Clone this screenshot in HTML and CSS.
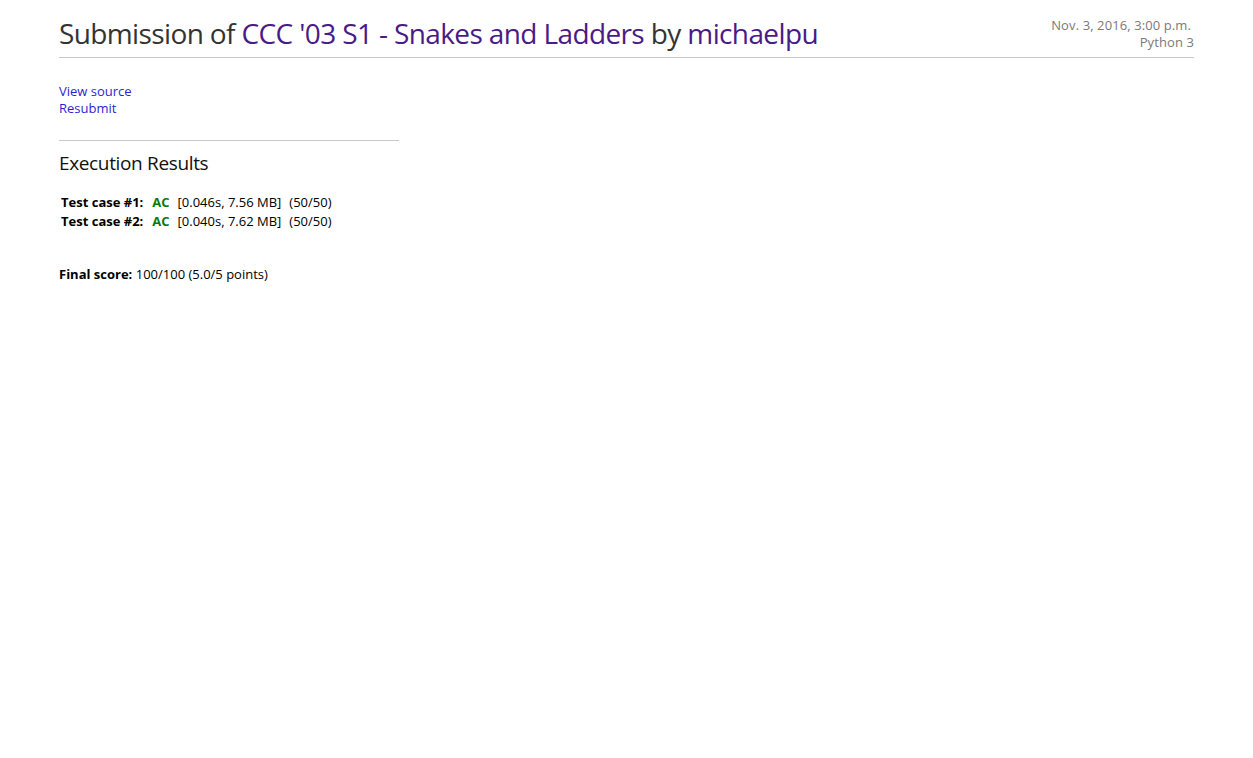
FILE: index.html
```html
<!DOCTYPE html>
<html>
<head>
<meta charset="utf-8">
<link rel="stylesheet" href="styles.css">
</head>
<body>
<div class="page">
  <header class="title-row">
    <h1 class="title">Submission of <a class="visited" href="#">CCC '03 S1 - Snakes and Ladders</a> by <a class="visited" href="#">michaelpu</a></h1>
    <div class="meta">
      <div class="date">Nov. 3, 2016, 3:00 p.m.</div>
      <div class="lang">Python 3</div>
    </div>
  </header>
  <div class="links">
    <a href="#">View source</a>
    <a href="#">Resubmit</a>
  </div>
  <hr class="sep">
  <h2 class="results-title">Execution Results</h2>
  <table class="cases">
    <tr><td class="label">Test case #1:</td><td class="status">AC</td><td class="detail">[0.046s, 7.56 MB]</td><td class="points">(50/50)</td></tr>
    <tr><td class="label">Test case #2:</td><td class="status">AC</td><td class="detail">[0.040s, 7.62 MB]</td><td class="points">(50/50)</td></tr>
  </table>
  <p class="final"><b>Final score:</b> 100/100 (5.0/5 points)</p>
</div>
</body>
</html>
```
FILE: styles.css
```css
html, body {
  margin: 0;
  padding: 0;
  background: #fff;
}
body {
  font-family: "Open Sans", "Noto Sans", sans-serif;
  color: #000;
  font-size: 13px;
}
.page {
  padding: 0 59px;
}
a {
  color: #2b1fcf;
  text-decoration: none;
}
a.visited {
  color: #4a1a86;
}
.title-row {
  display: flex;
  justify-content: space-between;
  align-items: flex-start;
  border-bottom: 1px solid #c8c8c8;
  padding-top: 14px;
  height: 58px;
  box-sizing: border-box;
}
.title {
  margin: 0;
  font-weight: 400;
  font-size: 28px;
  line-height: 38px;
  color: #333;
  letter-spacing: -0.62px;
}
.meta {
  text-align: right;
  font-size: 13px;
  line-height: 17px;
  color: #7a7a7a;
  padding-top: 3px;
  letter-spacing: 0.1px;
}
.meta .date {
  padding-right: 3px;
}
.links {
  display: flex;
  flex-direction: column;
  align-items: flex-start;
  margin-top: 25px;
  font-size: 13px;
  line-height: 17px;
}
.sep {
  width: 340px;
  margin: 23px 0 0 0;
  border: 0;
  border-top: 1px solid #c8c8c8;
}
.results-title {
  margin: 9px 0 0 0;
  font-weight: 400;
  font-size: 19px;
  line-height: 26px;
  color: #111;
  letter-spacing: -0.35px;
}
.cases {
  margin-top: 17px;
  border-collapse: separate;
  border-spacing: 2px 0;
  font-size: 13px;
  line-height: 19px;
}
.cases td {
  padding: 0 2px 0 0;
}
.cases .label {
  font-weight: 700;
}
.cases .status {
  font-weight: 700;
  color: #0a7a0a;
  padding-left: 5px;
  padding-right: 6px;
}
.cases .points {
  padding-left: 4px;
}
.final {
  margin: 35px 0 0 0;
  font-size: 13px;
  line-height: 17px;
}
```
